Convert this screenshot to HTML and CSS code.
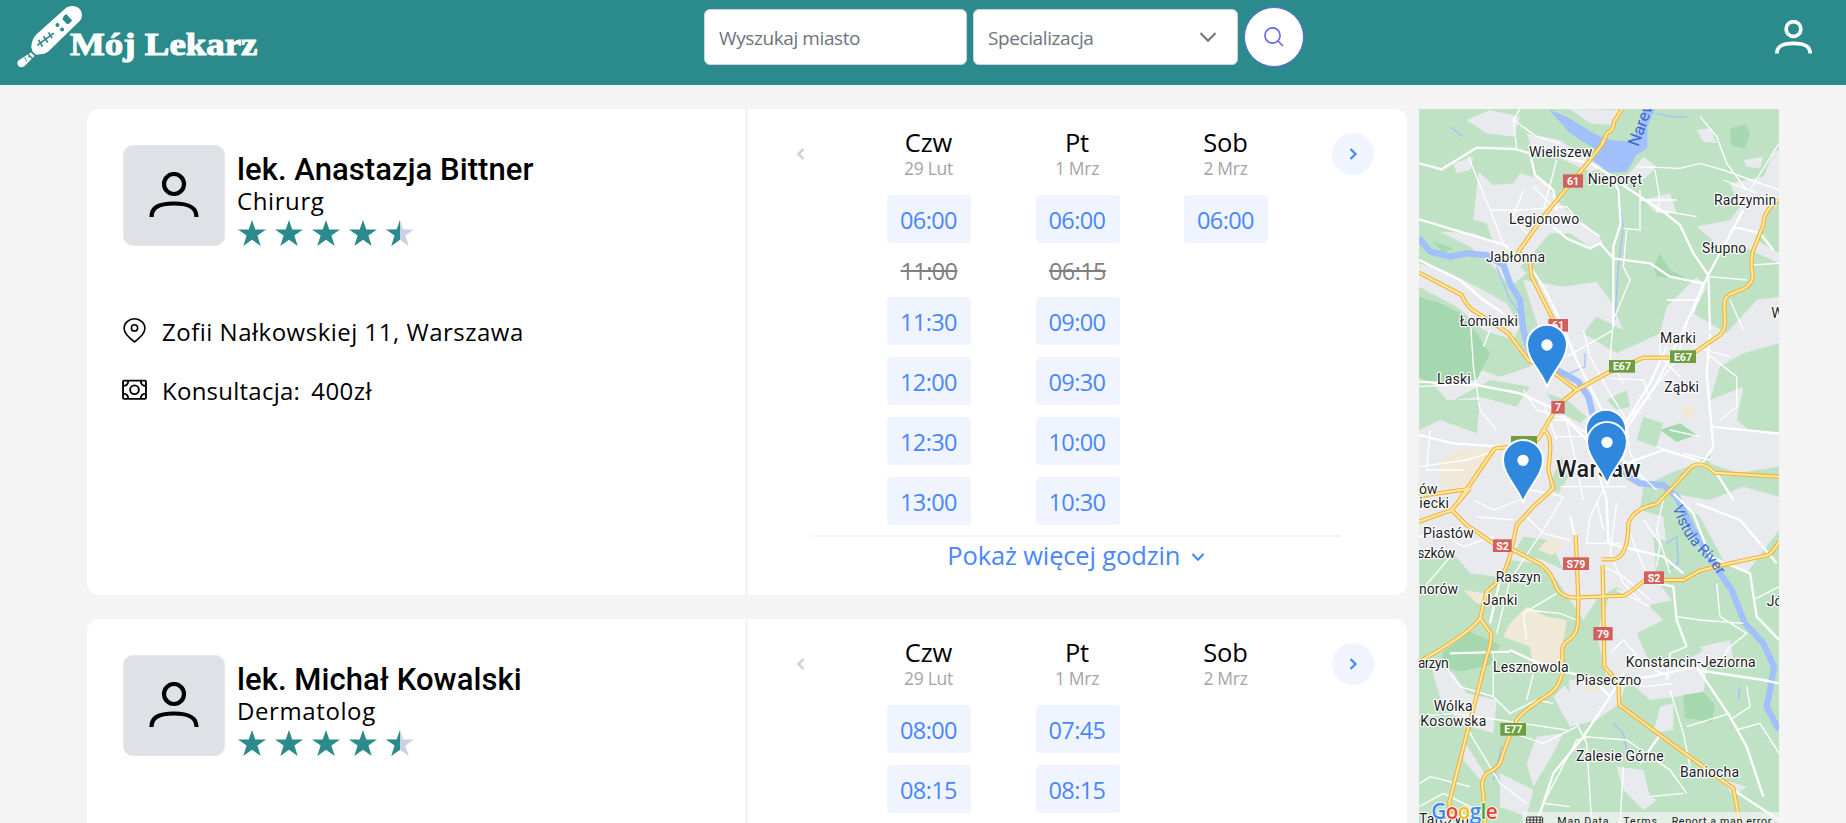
FILE: index.html
```
<!DOCTYPE html>
<html lang="pl">
<head>
<meta charset="utf-8">
<title>Mój Lekarz</title>
<link rel="stylesheet" href="styles.css">
</head>
<body>
<svg class="defs" aria-hidden="true">
  <symbol id="user" viewBox="0 0 50 47">
    <circle cx="25" cy="12" r="10"/>
    <path d="M2.500 45c0-9 6-13.500 22.500-13.500S47.500 36 47.500 45"/>
  </symbol>
  <symbol id="star" viewBox="0 0 28 26"><path d="M14 0l3.300 9.500H28l-8.600 6.100L22.700 26 14 19.700 5.300 26l3.300-10.400L0 9.500h10.700z"/></symbol>
  <symbol id="left" viewBox="0 0 10 14"><path d="M7.500 2L2.500 7l5 5"/></symbol>
  <symbol id="right" viewBox="0 0 10 14"><path d="M2.500 2l5 5-5 5"/></symbol>
  <symbol id="pin" viewBox="-66 -186 132 200"><path class="pin-body" d="M0 6C-16-40-60-76-60-121A60 60 0 0 1 60-121C60-76 16-40 0 6Z"/><circle class="pin-hole" cy="-120" r="17"/></symbol>
</svg>

<header class="topbar">
  <a class="logo">
    <svg class="thermo" viewBox="0 0 200 190">
      <path class="w" d="M147 8C158-3 182-2 191 9c9 10 9 26 0 36L112 122c-10 10-20 20-28 22l-24 3-11-9-4-14c1-16 6-28 15-38z"/>
      <path class="w" d="M44 140l11 11-31 31c-12 9-27-4-18-18z"/>
      <path class="g" d="M143 30l8-6 17 20-8 9-7 2-14-15z"/>
      <circle class="g" cx="124" cy="57" r="6"/><circle class="g" cx="138" cy="71" r="6"/>
      <path class="gs" d="M63 119L113 82M67 102l12 20M82 91l13 19M97 80l11 17"/>
      <path class="gs thin" d="M25 156l4 4M36 155l5-5M28 166l4-2M35 145l14 14"/>
    </svg>
    <span class="brand">Mój Lekarz</span>
  </a>
  <form class="search">
    <div class="field city">Wyszukaj miasto</div>
    <div class="field spec">Specializacja
      <svg class="chev" viewBox="0 0 18 12"><path d="M1.500 2L9 9.700 16.500 2"/></svg>
    </div>
    <div class="go"><svg viewBox="0 0 20 20"><circle cx="8.500" cy="8.500" r="7.600"/><path d="M14 14l5 5"/></svg></div>
  </form>
  <svg class="account"><use href="#user"/></svg>
</header>

<main class="page">
  <section class="cards">
    <article class="card">
      <div class="info">
        <div class="doctor">
          <div class="avatar"><svg><use href="#user"/></svg></div>
          <div>
            <h2>lek. Anastazja Bittner</h2>
            <p class="role">Chirurg</p>
            <div class="stars">
              <svg><use href="#star"/></svg><svg><use href="#star"/></svg><svg><use href="#star"/></svg><svg><use href="#star"/></svg>
              <span class="half"><svg class="off"><use href="#star"/></svg><span class="clip"><svg><use href="#star"/></svg></span></span>
            </div>
          </div>
        </div>
        <p class="line addr">
          <svg viewBox="0 0 24 24"><path d="M12 23C6 18 2 14.500 2 9.800a10 9 0 0 1 20 0C22 14.500 18 18 12 23z"/><circle cx="12" cy="9.500" r="3"/></svg>
          <span>Zofii Nałkowskiej 11, Warszawa</span>
        </p>
        <p class="line">
          <svg class="cash" viewBox="0 0 24 24"><rect x="1" y="3.500" width="22" height="17.500" rx="1"/><circle cx="12" cy="12.200" r="4.200"/><path d="M1 8.500q5 0 5-5M23 8.500q-5 0-5-5M1 16q5 0 5 5M23 16q-5 0-5 5"/></svg>
          <span>Konsultacja:</span><span class="price">400zł</span>
        </p>
      </div>
      <div class="schedule">
        <svg class="prev"><use href="#left"/></svg>
        <div class="days">
          <div class="day"><b>Czw</b><i>29 Lut</i><span class="slot">06:00</span><s>11:00</s><span class="slot">11:30</span><span class="slot">12:00</span><span class="slot">12:30</span><span class="slot">13:00</span></div>
          <div class="day"><b>Pt</b><i>1 Mrz</i><span class="slot">06:00</span><s>06:15</s><span class="slot">09:00</span><span class="slot">09:30</span><span class="slot">10:00</span><span class="slot">10:30</span></div>
          <div class="day"><b>Sob</b><i>2 Mrz</i><span class="slot">06:00</span></div>
        </div>
        <div class="next"><svg><use href="#right"/></svg></div>
        <div class="more">Pokaż więcej godzin <svg viewBox="0 0 14 10"><path d="M1.500 2L7 7.700 12.500 2"/></svg></div>
      </div>
    </article>

    <article class="card">
      <div class="info">
        <div class="doctor">
          <div class="avatar"><svg><use href="#user"/></svg></div>
          <div>
            <h2>lek. Michał Kowalski</h2>
            <p class="role">Dermatolog</p>
            <div class="stars">
              <svg><use href="#star"/></svg><svg><use href="#star"/></svg><svg><use href="#star"/></svg><svg><use href="#star"/></svg>
              <span class="half"><svg class="off"><use href="#star"/></svg><span class="clip"><svg><use href="#star"/></svg></span></span>
            </div>
          </div>
        </div>
      </div>
      <div class="schedule">
        <svg class="prev"><use href="#left"/></svg>
        <div class="days">
          <div class="day"><b>Czw</b><i>29 Lut</i><span class="slot">08:00</span><span class="slot">08:15</span></div>
          <div class="day"><b>Pt</b><i>1 Mrz</i><span class="slot">07:45</span><span class="slot">08:15</span></div>
          <div class="day"><b>Sob</b><i>2 Mrz</i></div>
        </div>
        <div class="next"><svg><use href="#right"/></svg></div>
      </div>
    </article>
  </section>

  <aside class="map">
    <svg viewBox="27 27 1080 2142">
      <defs>
        <g id="hw">
        <path d="M636 27L612 65Q612 92 592 98L575 135 540 180 470 265 400 350 325 455 360 490 365 530 400 600 440 680"/>
        <path d="M27 518L155 585Q165 610 185 628L270 683 295 700 355 780 440 825 500 870"/>
        <path d="M1107 300Q1060 330 1060 375L1030 450Q1020 480 1028 530 1025 555 1000 567L960 583Q943 590 943 615L945 665Q945 690 930 705L850 760 780 773H700L600 815 500 870 445 915 400 990Q385 1025 360 1035L255 1045 240 1065 145 1205"/>
        <path d="M27 1265L125 1230 180 1165M27 1188L170 1168M125 1230L170 1275 250 1330 310 1350 390 1392Q425 1415 440 1465 455 1490 490 1493L640 1487Q660 1480 705 1440L820 1440 870 1412 960 1390 1075 1365Q1090 1355 1107 1325"/>
        <path d="M400 990Q425 1000 420 1060L415 1110 430 1165 370 1220 320 1275 305 1345Q290 1430 230 1475L210 1555Q180 1600 27 1685M210 1555L243 1600Q245 1630 230 1670L118 2105 120 2140 150 2169"/>
        <path d="M497 1305L505 1500 503 1575Q500 1605 470 1625 457 1635 457 1650V1720Q445 1765 420 1780 330 1840 320 1860 295 1910 270 1990 255 2010 230 2020 210 2040 220 2080L225 2169"/>
        <path d="M578 1395L583 1700 605 1725 625 1750 628 1815 750 1905 880 2000 970 2065 990 2169"/>
        <path d="M575 1378H610Q655 1372 655 1270 670 1225 740 1212L785 1165 845 1100Q875 1080 915 1118L1107 1130"/>
        </g>
      </defs>
      <rect class="land" x="27" y="27" width="1080" height="2142"/>
      <!-- built-up areas -->
      <g class="urban">
        <path d="M205 215L250 255 310 250 330 220 400 240 440 300 470 330 560 400 580 430 540 440 480 400 420 400 360 470 330 500 250 430 230 370 190 360z"/>
        <path d="M90 395L190 400 260 430 310 480 350 520 300 560 250 500 180 440z"/>
        <path d="M27 490L100 510 200 560 290 610 330 680 310 720 220 690 140 620 27 560z"/>
        <path d="M340 540L460 560 560 545 600 600 640 690 560 650 520 700 620 760 750 700 770 620 860 530 890 560 850 640 950 700 1040 600 1107 590 1107 730 1000 760 930 800 900 900 1000 860 980 960 1030 1000 900 1060 860 1090 780 1120 700 1160 690 1230 760 1250 770 1340 790 1500 690 1520 620 1460 560 1500 520 1560 440 1440 380 1390 300 1380 260 1430 180 1420 130 1360 27 1380 27 990 90 960 200 1000 210 900 110 900 60 840 160 790 270 830 360 800 390 700z"/>
        <path d="M900 1010L1030 990 1107 1000 1107 1100 980 1120 900 1090zM780 1180L900 1200 1000 1160 1107 1190 1107 1290 1010 1420 940 1380 870 1250z"/>
        <path d="M960 250L1060 230 1090 160 1107 150 1107 300 1060 350 1040 420 1107 460 1107 490 1000 440 930 440 860 380 960 360 990 320z"/>
        <path d="M600 1480L700 1500 760 1560 680 1600 720 1690 830 1680 900 1640 880 1780 720 1800 650 1740 630 1810 560 1860 480 1880 430 1790 480 1740 590 1730 560 1600z"/>
        <path d="M170 60L240 30 330 50 310 110 230 100zM350 100L450 120 520 170 590 200 540 215 440 170 370 160zM480 27L630 30 600 75 540 70zM700 300L780 280 800 340 740 340zM640 240L700 170 740 200 700 240zM1000 180L1060 170 1050 205 1010 200zM860 90L900 85 920 130 880 125zM130 190L190 170 180 210 140 220z"/>
        <path d="M60 1690L130 1720 170 1780 260 1800 250 1900 150 1870 90 1790zM380 1910L460 1900 430 1960 370 2060 350 1990zM270 2020L370 2070 350 2150 270 2120zM620 2000L700 2010 720 2090 740 2100 700 2130 640 2070zM160 1920L230 2030 210 2040 160 1980zM940 2040L1010 2060 970 2090zM750 1820L790 1810 790 1890 730 1900zM870 1640L960 1620 970 1680 910 1700z"/>
      </g>
      <g class="wood">
        <path d="M27 590L90 610 150 640 200 700 240 760 200 840 60 850 27 830zM960 85l48-12 12 30-16 42-40-8zM730 500l20-40 30 50 50 25-90-5zM750 990l60-20 50 35-60 20zM100 1655l80-60 90 40-30 60-90 20-60-20zM820 1785l60-10 35 40-10 50-80-10zM70 425l60 20-30 15z"/>
      </g>
      <g class="land">
        <path d="M340 1310l80 10 40 90-60-30-90-20zM590 900l60-30 10 50-40 10zM130 900l110-60 120 20-40 60-110-30zM415 1160l40-90 20 60-30 50zM700 950l60 20-20 70-60-20zM730 1310l60 20 10 190-60-80zM480 1780l-40-60 30-20zM410 880l60 20 60 50-20 20-70-40z"/>
      </g>
      <g class="sand">
        <path d="M90 1080l60-30 110-5-10 40-60 50-30 40-70-20zM385 1350l30-35 35 5 5 30-30 15zM350 1520l60 30 60 10-10 60-10 90-80-10-10-60-80-30 20-40zM160 1470l60 10 20 40-40-10zM820 910l30 10 0 45-35-20zM520 1750l80-20-20 40-50 10z"/>
      </g>
      <!-- water -->
      <path class="lake" d="M415 27L470 50 560 105 600 120 660 125 690 80 700 27H735L712 80 712 145 680 165 650 215 600 218 540 178 560 150 480 100z"/>
      <g class="water">
        <path class="river" d="M27 415L60 455 120 470 170 460 230 465 280 495 300 550 330 600 340 690 360 760 400 790 460 820 505 845 535 890 545 930 555 970 600 1060 655 1130 690 1150 760 1155 800 1190 850 1290 930 1420 965 1470 1005 1570 1060 1630 1092 1700 1080 1770 1070 1820 1107 1890"/>
        <path d="M260 500L300 600 330 640M735 40L800 52 830 50M620 270L640 380 625 500 615 660M525 760L525 800 480 820M120 80L160 110M770 1330L800 1310 805 1390 775 1410M250 2040L275 1940M610 1870L640 1900 650 1950M990 1760L985 1800"/>
      </g>
      <!-- local roads -->
      <g class="minor">
        <path d="M330 27L310 60 320 145M310 60L380 110 450 130M440 180L400 330M340 270L310 350 350 400M240 330L330 330 470 320 510 370 570 410M370 260L440 330M175 170L240 330 280 430M680 200L810 205 870 190 940 210 1107 270M735 210L750 300 740 330 860 350M940 240L1040 280M1020 270L1107 130M870 50L920 110 950 190 1010 270M690 270L690 390 640 385M800 300L690 300M650 390L640 500 660 540 610 660M900 530L1010 540M1025 495L1107 490M870 600L770 600M960 600L1000 690M880 545L850 640"/>
        <path d="M520 690L540 770 600 880 650 960M610 660L600 780 640 850M600 835L700 840 720 900M830 680L800 780 760 830 640 980M470 770L610 690M850 740L960 770M750 700L750 770 810 830M890 760L980 830 980 920 930 960M180 640L190 800 210 930 260 990M220 740L240 690M27 860L200 850M60 990L50 1110 160 1110M27 1100L170 1080 300 1040M300 870L400 910 440 1020M340 870L380 930 480 960M430 960L470 960 620 1060 740 1170M470 960L500 1100 520 1200M440 1010L580 1010 620 1100 690 1130M650 970L660 1060 700 1140M580 1170L540 1250 530 1330 630 1330M560 1200L580 1290M450 1160L650 1160M340 1070L310 1110 360 1170 460 1190M190 1200L250 1230 330 1200M200 1250L310 1260M350 1250L400 1300 480 1320M620 1210L600 1360 640 1450 690 1500M660 1300L700 1400 730 1450M700 1260L750 1330 740 1400M760 1200L740 1290 780 1420M820 1060L900 1080M780 990L870 1010M740 1040L860 1080"/>
        <path d="M27 1480L130 1360M60 1280L160 1340 250 1310M440 1480L340 1540 350 1620M460 1190L400 1290 300 1440 260 1600M500 1560L450 1540 350 1530M580 1400L640 1430 720 1500M620 1470L720 1520M600 1660L640 1620 710 1700 780 1730M830 1640L780 1660 770 1740M920 1450L930 1550 1010 1600 960 1640 920 1700M1107 1460L1030 1500M800 1550L870 1560 1000 1570M640 1750L710 1760 790 1750"/>
        <path d="M100 1690L150 1760 250 1790 300 1840 380 1800 430 1810M250 1660L250 1790M370 1720L350 1800M130 1840L270 1860 470 1890M150 1850L270 2050 350 2110M27 1850L130 1840M400 2110L500 1920 540 1910M500 1870L530 1930 540 2090 545 2169M520 1910L650 1920 780 2010 830 2080M640 2000L630 2169M780 1770L820 1900 840 2000M830 1880L960 1840M1010 1760L1020 1820 960 1860M980 1890L1050 1870 1107 1960M720 2090L820 2080M30 2050L60 2030 180 2060M27 2120L100 2080 240 2150M380 2169L400 2110 480 2120M310 1900L400 1930 500 1880"/>
      </g>
      <g class="major">
        <path d="M27 190L95 208 200 143 315 147 360 160 375 225 430 270 440 330M430 165L540 190 600 225 625 270 632 370 610 440 610 680M27 358L150 395 285 435 325 480M630 250L760 335 810 375 850 460 895 525 860 600 820 690 740 850 640 1000M895 525L900 690M430 380L470 415 540 445 570 430 610 475 720 490 780 530 880 550M1000 330L895 525M970 380L1050 400 1090 450M27 480L150 540 220 600 310 660M360 500L400 560 440 640 500 780 560 900 600 980"/>
        <path d="M27 845L200 855 330 880 440 930 540 1030M27 1005L130 1030 270 1040M900 700L890 820 910 1040 870 1100M640 980L720 850 770 740M900 980L1107 1000M560 970L560 1100 590 1200 595 1330 760 1370 820 1420M650 1090L760 1050 860 1080 920 1120 970 1200M500 1330L480 1250M790 1180L850 1240 900 1370 1020 1420 1040 1550 1107 1620M860 1210L990 1260 1100 1390M700 1440L790 1460 800 1560 830 1640M27 1310L120 1290M300 1650L430 1710 540 1730 600 1790 520 1910 430 2020 380 2169M600 1790L640 1720M640 1740L720 1730 860 1700 960 1850 1010 1940 1060 2090M860 1710L1060 1740 1107 1750M750 1905L690 1990M970 2070L1107 2160M240 1570L270 1440M120 1660L300 1655"/>
      </g>
      <!-- highways: the same lines twice, casing and fill -->
      <use href="#hw" class="casing"/>
      <use href="#hw" class="fill"/>
      <g class="red"><rect x="459" y="223" width="60" height="40"/><rect x="415" y="657" width="59" height="38"/><rect x="424" y="903" width="40" height="38"/><rect x="249" y="1318" width="56" height="38"/><rect x="459" y="1372" width="78" height="38"/><rect x="702" y="1414" width="60" height="38"/><rect x="550" y="1581" width="58" height="40"/></g>
      <g class="green"><rect x="597" y="780" width="78" height="38"/><rect x="780" y="751" width="78" height="38"/><rect x="303" y="1008" width="78" height="38"/><rect x="271" y="1869" width="77" height="38"/></g>
      <g class="code">
        <text x="489" y="255">61</text><text x="444" y="688">61</text><text x="444" y="933">7</text><text x="278" y="1349">S2</text><text x="498" y="1403">S79</text><text x="732" y="1445">S2</text><text x="579" y="1614">79</text>
        <text x="636" y="811">E67</text><text x="819" y="782">E67</text><text x="310" y="1900">E77</text>
      </g>
      <g class="town">
        <text x="357" y="172" textLength="190">Wieliszew</text><text x="533" y="252" textLength="163">Nieporęt</text><text x="912" y="316" textLength="187">Radzymin</text>
        <text x="297" y="373" textLength="211">Legionowo</text><text x="876" y="458" textLength="133">Słupno</text><text x="228" y="486" textLength="177">Jabłonna</text>
        <text x="149" y="677" textLength="175">Łomianki</text><text x="1084" y="653">W</text><text x="750" y="728" textLength="108">Marki</text>
        <text x="763" y="876" textLength="104">Ząbki</text><text x="81" y="851" textLength="101">Laski</text>
        <text x="27" y="1181">ów</text><text x="28" y="1224" textLength="89">iecki</text><text x="39" y="1314" textLength="152">Piastów</text>
        <text x="22" y="1373" textLength="114">szków</text><text x="257" y="1446" textLength="135">Raszyn</text><text x="27" y="1483" textLength="117">norów</text>
        <text x="219" y="1516" textLength="103">Janki</text><text x="1070" y="1518">Jó</text><text x="24" y="1703" textLength="92">arzyn</text>
        <text x="249" y="1715" textLength="227">Lesznowola</text><text x="647" y="1701" textLength="390">Konstancin-Jeziorna</text><text x="497" y="1755" textLength="197">Piaseczno</text>
        <text x="71" y="1832" textLength="117">Wólka</text><text x="31" y="1877" textLength="198">Kosowska</text><text x="498" y="1984" textLength="263">Zalesie Górne</text>
        <text x="810" y="2031" textLength="177">Baniocha</text><text x="27" y="2173" textLength="150">Tarczyn</text>
        <text class="capital" x="438" y="1132" textLength="254">Warsaw</text>
      </g>
      <path id="vistula" class="nodraw" d="M788 1222C815 1307 850 1340 870 1360S920 1405 985 1540"/>
      <text class="watername"><textPath href="#vistula">Vistula River</textPath></text>
      <text class="watername narew" transform="translate(685 142) rotate(-70)">Narew</text>

      <use href="#pin" x="345" y="669" width="132" height="200"/>
      <use href="#pin" x="522" y="924" width="132" height="200"/>
      <use href="#pin" x="525" y="961" width="132" height="200"/>
      <use href="#pin" x="273" y="1015" width="132" height="200"/>

      <rect class="legal-bg" x="337" y="2136" width="770" height="33"/>
      <g class="keys"><rect x="350" y="2151" width="48" height="30" rx="3"/><path d="M350 2160h48M350 2169h48M360 2151v30M370 2151v30M380 2151v30M390 2151v30"/></g>
      <g class="legal"><text x="442" y="2174" textLength="154">Map Data</text><text x="640" y="2174" textLength="101">Terms</text><text x="785" y="2174" textLength="299">Report a map error</text></g>
      <text class="google" x="64" y="2157" textLength="199"><tspan class="gb">G</tspan><tspan class="gr">o</tspan><tspan class="gy">o</tspan><tspan class="gb">g</tspan><tspan class="gg">l</tspan><tspan class="gr">e</tspan></text>
    </svg>
  </aside>
</main>
</body>
</html>
```

FILE: styles.css
```
*{box-sizing:border-box}
html,body{height:100%}
body{margin:0;background:#f4f4f4;color:#000;font-family:"Open Sans","Noto Sans",sans-serif;font-weight:400;overflow:hidden}
h2,p{margin:0}
.defs{position:absolute;width:0;height:0}

.topbar{display:flex;height:85px;background:#2b8a8b;padding:6px 34px 0 17px;align-items:flex-start}
.logo{display:flex;width:687px;height:64px}
.thermo{width:67px;height:63px;flex:none;margin-left:-1px}
.thermo .w{fill:#fff}
.thermo .g{fill:#2b8a8b}
.thermo .gs{fill:none;stroke:#2b8a8b;stroke-width:5}
.thermo .thin{stroke-width:4}
.brand{margin:17px 0 0 -13px;height:44px;font:bold 31px/44px "Liberation Serif",serif;color:#fff;-webkit-text-stroke:1px #fff;white-space:nowrap;transform:scaleX(1.19);transform-origin:0 0}
.search{display:flex;gap:6px;margin:0}
.field{height:56px;margin-top:3px;background:#fff;border:1px solid #ced4da;border-radius:6px;padding:0 14px;font-size:19px;line-height:57px;color:#6c757d;letter-spacing:-.4px}
.city{width:263px}
.spec{width:265px;display:flex;justify-content:space-between}
.chev{width:18px;height:12px;margin:21px 6px 0 0;fill:none;stroke:#6c757d;stroke-width:2}
.go{width:60px;height:60px;margin-top:1px;border:1px solid #6366f1;border-radius:50%;background:#fff;display:flex;align-items:center;justify-content:center}
.go svg{width:20px;height:20px;fill:none;stroke:#6366f1;stroke-width:1.600}
.account{width:37px;height:35px;margin:14px 0 0 auto;fill:none;stroke:#fff;stroke-width:5}

.page{display:flex;gap:12px;padding:24px 0 0 87px;height:738px;overflow:hidden}
.cards{width:1320px;display:flex;flex-direction:column;gap:24px}
.card{display:flex;flex:none;height:486px;background:#fff;border-radius:12px}
.info{width:661px;border-right:3px solid #f4f4f4;padding:36px}
.doctor{display:flex;gap:12px}
.avatar{width:102px;height:101px;border-radius:10px;border:1px solid #e4e8eb;background:#dee2e6;display:flex;align-items:center;justify-content:center}
.avatar svg{width:50px;height:47px;fill:none;stroke:#000;stroke-width:4.200}
.doctor h2{font:500 31px/36px Roboto,sans-serif;margin:7px 0 0;letter-spacing:.07px}
.role{font-size:24px;line-height:30px;letter-spacing:.6px;margin:-2px 0 4px}
.stars{display:flex;gap:9px;fill:#2b8a8b;padding-left:1px}
.stars svg{width:28px;height:26px;display:block}
.half{display:grid}
.half>*{grid-area:1/1}
.half .off{fill:#cbd1e4}
.clip{width:14px;overflow:hidden}
.line{display:flex;font-size:24px;line-height:34px;letter-spacing:.5px;margin-top:25px}
.line svg{width:25px;height:25px;margin:3px 15px 0 -1px;fill:none;stroke:#000;stroke-width:1.500}
.line .cash{stroke-width:1.800}
.line.addr{margin-top:69px}
.line .cash+span{letter-spacing:.25px}
.price{margin-left:11px}

.schedule{flex:1;display:grid;grid-template-columns:139px 381px 1fr;padding-top:22px;align-content:start}
.prev{width:10px;height:14px;margin:16px 0 0 48px;fill:none;stroke:#d2d2d2;stroke-width:2.600}
.days{display:flex;justify-content:space-between;height:402px}
.day{width:84px;display:flex;flex-direction:column;align-items:center}
.day b{font-weight:400;font-size:25.500px;line-height:26px;height:26px;margin-top:-2px;letter-spacing:-.1px;padding-right:1px}
.day i{font-style:normal;font-size:17.500px;line-height:26px;color:#a5a5a5;letter-spacing:-.3px;height:40px;padding-right:1px}
.day>*{flex:none}
.slot{width:84px;height:48px;margin-bottom:12px;border-radius:4px;background:#eff4fe;color:#4a87ff;font-size:23.500px;line-height:50px;letter-spacing:-.6px;text-align:center;padding-right:1px}
.day s{height:42px;font-size:23.500px;line-height:33px;letter-spacing:-.6px;color:#808080}
.next{width:42px;height:42px;margin:2px 0 0 64px;border-radius:50%;background:#eff4fe;display:flex;align-items:center;justify-content:center}
.next svg{width:10px;height:14px;fill:none;stroke:#4a87ff;stroke-width:2.200}
.more{grid-column:1/-1;width:527px;margin:2px 0 0 66px;border-top:2px solid #f4f4f4;color:#4a87ff;font-size:25.500px;line-height:37px;letter-spacing:-.15px;text-align:center;padding-right:3px}
.more svg{width:14px;height:10px;margin-left:4px;vertical-align:3px;fill:none;stroke:#4a87ff;stroke-width:2.200}

.map{width:360px;height:714px;overflow:hidden}
.map svg{display:block;width:360px;height:714px}
.land{fill:#bfe2c5}
.urban{fill:#e8eaed}
.wood{fill:#a5d8af}
.sand{fill:#f1e9d7}
.lake{fill:#a2c0fb}
.water{fill:none;stroke:#a2c0fb;stroke-width:4}
.river{stroke-width:19}
.minor{fill:none;stroke:#fff;stroke-width:4}
.major{fill:none;stroke:#fff;stroke-width:7;stroke-linejoin:round}
.casing{fill:none;stroke:#f1b53a;stroke-width:13;stroke-linejoin:round}
.fill{fill:none;stroke:#ffe8a3;stroke-width:6;stroke-linejoin:round}
.red{fill:#d2605e}
.green{fill:#6e9e3f}
.code{font:bold 32px Roboto,sans-serif;fill:#fff;text-anchor:middle}
.town{font:42px Roboto,sans-serif;fill:#202124;stroke:#fff;stroke-width:7;stroke-linejoin:round;paint-order:stroke}
.capital{font-size:70px;font-weight:500}
.nodraw{fill:none}
.watername{font:45px Roboto,sans-serif;fill:#3f6bd0}
.narew{font-size:50px}
.pin-body{fill:#2f87de;stroke:#fff;stroke-width:6;stroke-linejoin:round}
.pin-hole{fill:#fff}
.legal-bg{fill:#f5f5f5;fill-opacity:.7}
.legal{font:32px Roboto,sans-serif;fill:#222}
.keys{fill:none;stroke:#333;stroke-width:3}
.google{font:62px "Open Sans",sans-serif;font-weight:600;stroke:#fff;stroke-width:5;paint-order:stroke}
.gb{fill:#4285f4}.gr{fill:#ea4335}.gy{fill:#fbbc05}.gg{fill:#34a853}
```
